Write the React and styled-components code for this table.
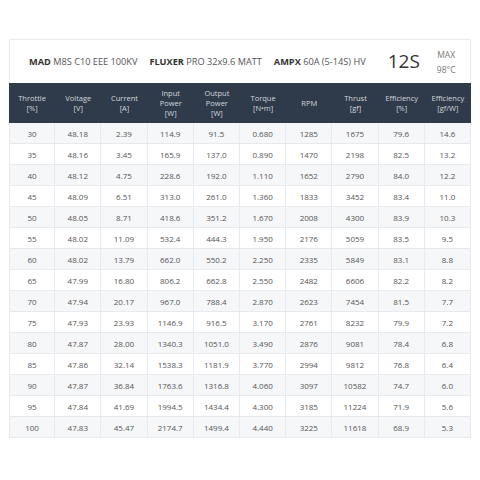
import React from "react"
import styled, { createGlobalStyle } from "styled-components"

const GlobalStyle = createGlobalStyle`
  body {
    margin: 0;
    background: #fff;
    font-family: "Open Sans", "Liberation Sans", sans-serif;
  }
`

const Card = styled.div`
  box-sizing: border-box;
  width: 462px;
  margin: 39px 0 0 9px;
  border: 1px solid #e8e9eb;
  border-bottom: 0;
`

const TitleBar = styled.div`
  display: flex;
  align-items: center;
  height: 43px;
  padding-left: 19px;
  color: #555;
  font-size: 9.2px;
  white-space: nowrap;
`

const Part = styled.span`
  margin-right: 12px;

  b {
    color: #333;
    font-weight: 700;
  }
`

const Cells = styled.span`
  margin-left: 10px;
  font-size: 19px;
  color: #333;
  line-height: 1;
`

const MaxTemp = styled.span`
  margin-left: 17px;
  font-size: 8.5px;
  line-height: 15px;
  color: #777;
  text-align: center;
`

const Grid = styled.div`
  display: grid;
  grid-template-columns: repeat(10, 1fr);
  margin: 0 -1px;
`

const Head = styled.div`
  display: flex;
  align-items: center;
  justify-content: center;
  height: 40px;
  background: #2f3a4a;
  color: #d3d8de;
  font-size: 7.5px;
  line-height: 10px;
  text-align: center;
`

const Cell = styled.div`
  display: flex;
  align-items: center;
  justify-content: center;
  height: 20px;
  border-right: 1px solid #e7eaee;
  border-bottom: 1px solid #e7eaee;
  background: ${({ $odd }) => ($odd ? "#f5f7f9" : "#fff")};
  color: #555;
  font-size: 8px;

  &:nth-child(10n + 1) {
    border-left: 1px solid #e7eaee;
  }
`

const headers = [
  ["Throttle", "[%]"],
  ["Voltage", "[V]"],
  ["Current", "[A]"],
  ["Input", "Power", "[W]"],
  ["Output", "Power", "[W]"],
  ["Torque", "[N•m]"],
  ["RPM"],
  ["Thrust", "[gf]"],
  ["Efficiency", "[%]"],
  ["Efficiency", "[gf/W]"],
]

const rows = [
  ["30", "48.18", "2.39", "114.9", "91.5", "0.680", "1285", "1675", "79.6", "14.6"],
  ["35", "48.16", "3.45", "165.9", "137.0", "0.890", "1470", "2198", "82.5", "13.2"],
  ["40", "48.12", "4.75", "228.6", "192.0", "1.110", "1652", "2790", "84.0", "12.2"],
  ["45", "48.09", "6.51", "313.0", "261.0", "1.360", "1833", "3452", "83.4", "11.0"],
  ["50", "48.05", "8.71", "418.6", "351.2", "1.670", "2008", "4300", "83.9", "10.3"],
  ["55", "48.02", "11.09", "532.4", "444.3", "1.950", "2176", "5059", "83.5", "9.5"],
  ["60", "48.02", "13.79", "662.0", "550.2", "2.250", "2335", "5849", "83.1", "8.8"],
  ["65", "47.99", "16.80", "806.2", "662.8", "2.550", "2482", "6606", "82.2", "8.2"],
  ["70", "47.94", "20.17", "967.0", "788.4", "2.870", "2623", "7454", "81.5", "7.7"],
  ["75", "47.93", "23.93", "1146.9", "916.5", "3.170", "2761", "8232", "79.9", "7.2"],
  ["80", "47.87", "28.00", "1340.3", "1051.0", "3.490", "2876", "9081", "78.4", "6.8"],
  ["85", "47.86", "32.14", "1538.3", "1181.9", "3.770", "2994", "9812", "76.8", "6.4"],
  ["90", "47.87", "36.84", "1763.6", "1316.8", "4.060", "3097", "10582", "74.7", "6.0"],
  ["95", "47.84", "41.69", "1994.5", "1434.4", "4.300", "3185", "11224", "71.9", "5.6"],
  ["100", "47.83", "45.47", "2174.7", "1499.4", "4.440", "3225", "11618", "68.9", "5.3"],
]

export default function App() {
  return (
    <>
      <GlobalStyle />
      <Card>
        <TitleBar>
          <Part>
            <b>MAD</b> M8S C10 EEE 100KV
          </Part>
          <Part>
            <b>FLUXER</b> PRO 32x9.6 MATT
          </Part>
          <Part>
            <b>AMPX</b> 60A (5-14S) HV
          </Part>
          <Cells>12S</Cells>
          <MaxTemp>
            MAX
            <br />
            98°C
          </MaxTemp>
        </TitleBar>
        <Grid>
          {headers.map((lines, i) => (
            <Head key={i}>
              <div>
                {lines.map((l, j) => (
                  <div key={j}>{l}</div>
                ))}
              </div>
            </Head>
          ))}
          {rows.map((row, r) =>
            row.map((v, c) => (
              <Cell key={`${r}-${c}`} $odd={r % 2 === 0}>
                {v}
              </Cell>
            ))
          )}
        </Grid>
      </Card>
    </>
  )
}
